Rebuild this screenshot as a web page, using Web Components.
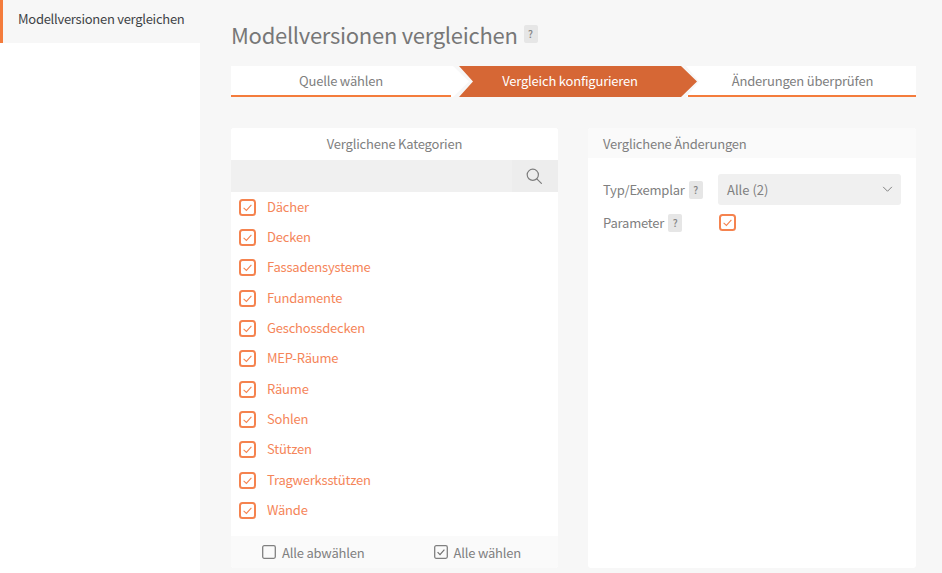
<!DOCTYPE html>
<html lang="de">
<head>
<meta charset="utf-8">
<title>Modellversionen vergleichen</title>
<style>
  html, body { margin: 0; height: 100%; overflow: hidden; }
  body {
    font-family: "Noto Sans CJK SC", "Noto Sans", sans-serif;
    font-size: 13px;
    letter-spacing: -.2px;
    color: #808080;
    background: #f7f7f7;
  }
</style>
</head>
<body>

<compare-app>
  <side-nav slot="nav">Modellversionen vergleichen</side-nav>
  <page-title slot="title">Modellversionen vergleichen</page-title>
  <step-bar slot="steps"></step-bar>

  <compare-panel slot="left" heading="Verglichene Kategorien" centered>
    <search-box></search-box>
    <div style="display:flex;flex-direction:column;flex:1">
      <category-item>Dächer</category-item>
      <category-item>Decken</category-item>
      <category-item>Fassadensysteme</category-item>
      <category-item>Fundamente</category-item>
      <category-item>Geschossdecken</category-item>
      <category-item>MEP-Räume</category-item>
      <category-item>Räume</category-item>
      <category-item>Sohlen</category-item>
      <category-item>Stützen</category-item>
      <category-item>Tragwerksstützen</category-item>
      <category-item>Wände</category-item>
    </div>
    <select-footer></select-footer>
  </compare-panel>

  <compare-panel slot="right" heading="Verglichene Änderungen">
    <change-form></change-form>
  </compare-panel>
</compare-app>

<script>
const CHECK = `<svg viewBox="0 0 17 17" width="17" height="17" fill="none">
  <rect x="1" y="1" width="15" height="15" rx="2.5" stroke="#f5834f" stroke-width="2"/>
  <path d="M4.6 8.8 L7.4 11.4 L12.4 5.8" stroke="#f5834f" stroke-width="1.1"/>
</svg>`;

class CompareApp extends HTMLElement {
  constructor() {
    super();
    this.attachShadow({ mode: 'open' });
    this.shadowRoot.innerHTML = `
      <style>
        :host { display: grid; grid-template-columns: 200px 1fr; height: 573px; }
        .side { background: #fff; }
        .main { padding: 16px 26px 0 31px; display: flex; flex-direction: column; }
        .panels { display: grid; grid-template-columns: 327px 328px; gap: 30px; margin-top: 31px; height: 440px; }
      </style>
      <div class="side"><slot name="nav"></slot></div>
      <div class="main">
        <slot name="title"></slot>
        <slot name="steps"></slot>
        <div class="panels">
          <slot name="left"></slot>
          <slot name="right"></slot>
        </div>
      </div>`;
  }
}

class SideNav extends HTMLElement {
  constructor() {
    super();
    this.attachShadow({ mode: 'open' });
    this.shadowRoot.innerHTML = `
      <style>
        :host {
          display: block; height: 43px; box-sizing: border-box;
          background: #f7f7f7; border-left: 3px solid #f47c3c; white-space: nowrap;
          padding-left: 15px; letter-spacing: -.27px; line-height: 38px; color: #3f4447;
        }
      </style>
      <slot></slot>`;
  }
}

class HelpMark extends HTMLElement {
  constructor() {
    super();
    this.attachShadow({ mode: 'open' });
    this.shadowRoot.innerHTML = `
      <style>
        :host {
          display: inline-block; width: 14px; height: 18px; background: #e6e6e6; border-radius: 2px;
          font-size: 10px; line-height: 18px; text-align: center; color: #858585; font-weight: 500;
          letter-spacing: 0;
        }
      </style>?`;
  }
}

class PageTitle extends HTMLElement {
  constructor() {
    super();
    this.attachShadow({ mode: 'open' });
    this.shadowRoot.innerHTML = `
      <style>
        :host { display: flex; align-items: center; gap: 6px; height: 35px; margin-bottom: 15px;
          font-size: 22px; color: #777; letter-spacing: -.28px; white-space: nowrap; }
      </style>
      <slot></slot><help-mark></help-mark>`;
  }
}

class StepBar extends HTMLElement {
  constructor() {
    super();
    this.attachShadow({ mode: 'open' });
    this.shadowRoot.innerHTML = `
      <style>
        :host { display: flex; height: 31px; line-height: 30px; text-align: center; }
        div { box-sizing: border-box; }
        .one { width: 238px; margin-right: -10px; padding-right: 18px;
          background: linear-gradient(#f47c3c, #f47c3c) 0 100% / 220px 2px no-repeat, #fff;
          clip-path: polygon(0 0, 222px 0, 100% 50%, 222px 100%, 0 100%); }
        .two { width: 238px; background: #d66735; color: #fff; padding-right: 16px;
          clip-path: polygon(0 0, 222px 0, 100% 50%, 222px 100%, 0 100%, 14px 50%); }
        .three { flex: 1; margin-left: -11px; padding-left: 3px;
          background: linear-gradient(#f47c3c, #f47c3c) 2px 100% / 100% 2px no-repeat, #fff;
          clip-path: polygon(0 0, 100% 0, 100% 100%, 0 100%, 13px 50%); }
      </style>
      <div class="one">Quelle wählen</div>
      <div class="two">Vergleich konfigurieren</div>
      <div class="three">Änderungen überprüfen</div>`;
  }
}

class ComparePanel extends HTMLElement {
  constructor() {
    super();
    this.attachShadow({ mode: 'open' });
    const centered = this.hasAttribute('centered');
    this.shadowRoot.innerHTML = `
      <style>
        :host { display: flex; flex-direction: column; background: #fff; border-radius: 3px; overflow: hidden; height: 440px; }
        h2 { margin: 0; height: ${centered ? 32 : 30}px; flex: none; font-size: 13px; font-weight: 400; line-height: 31px;
          color: #808080; text-align: ${centered ? 'center' : 'left'}; padding-left: ${centered ? 0 : 15}px;
          background: ${centered ? '#fff' : '#fafafa'}; }
        .body { flex: 1; display: flex; flex-direction: column; min-height: 0; }
      </style>
      <h2>${this.getAttribute('heading')}</h2>
      <div class="body"><slot></slot></div>`;
  }
}

class SearchBox extends HTMLElement {
  constructor() {
    super();
    this.attachShadow({ mode: 'open' });
    this.shadowRoot.innerHTML = `
      <style>
        :host { display: flex; justify-content: flex-end; height: 32px; background: #f0f0f0; flex: none; }
        span { width: 46px; box-sizing: border-box; padding-right: 3px; background: #ededed; display: flex; align-items: center; justify-content: center; }
      </style>
      <span>
        <svg viewBox="0 0 16 16" width="16" height="16" fill="none" stroke="#7d7d7d" stroke-width="1.2">
          <circle cx="6.8" cy="6.8" r="5.6"/><path d="M10.8 10.8 L15.4 15.4" stroke-linecap="round"/>
        </svg>
      </span>`;
  }
}

class CategoryItem extends HTMLElement {
  constructor() {
    super();
    this.attachShadow({ mode: 'open' });
    this.shadowRoot.innerHTML = `
      <style>
        :host { display: flex; align-items: center; height: 30.35px; padding-left: 8px; gap: 11px;
          color: #f58559; }
        slot { display: block; padding-bottom: 2px; }
        svg { flex: none; }
      </style>
      ${CHECK}<slot></slot>`;
  }
}

class SelectFooter extends HTMLElement {
  constructor() {
    super();
    this.attachShadow({ mode: 'open' });
    this.shadowRoot.innerHTML = `
      <style>
        :host { display: grid; grid-template-columns: 1fr 1fr; height: 32px; flex: none; background: #fafafa;
          color: #808080; }
        div { display: flex; align-items: center; gap: 6px; }
        .off { padding-left: 31px; }
        .on { padding-left: 39px; }
        svg { flex: none; }
      </style>
      <div class="off">
        <svg viewBox="0 0 14 14" width="14" height="14" fill="none"><rect x=".7" y=".7" width="12.6" height="12.6" rx="1.5" stroke="#808080" stroke-width="1.3"/></svg>
        Alle abwählen
      </div>
      <div class="on">
        <svg viewBox="0 0 14 14" width="14" height="14" fill="none"><rect x=".7" y=".7" width="12.6" height="12.6" rx="1.5" stroke="#808080" stroke-width="1.3"/><path d="M3.6 7.2 L6 9.6 L10.4 4.6" stroke="#707070" stroke-width="1.2"/></svg>
        Alle wählen
      </div>`;
  }
}

class ChangeForm extends HTMLElement {
  constructor() {
    super();
    this.attachShadow({ mode: 'open' });
    this.shadowRoot.innerHTML = `
      <style>
        :host { display: grid; grid-template-columns: 115px 183px; grid-auto-rows: auto; padding: 16px 0 0 15px;
          color: #808080; align-items: center; }
        .label { display: flex; align-items: center; gap: 4px; }
        .select { height: 31px; background: #f0f0f0; border-radius: 3px; display: flex; align-items: center;
          justify-content: space-between; padding: 0 8px 0 9px; letter-spacing: 0; }
        .check { height: 35px; display: flex; align-items: center; padding-left: 1px; }
      </style>
      <div class="label">Typ/Exemplar <help-mark></help-mark></div>
      <div class="select">Alle (2)
        <svg viewBox="0 0 12 8" width="11" height="7" fill="none" stroke="#7d7d7d" stroke-width="1.1"><path d="M1 1 L6 6 L11 1"/></svg>
      </div>
      <div class="label">Parameter <help-mark></help-mark></div>
      <div class="check">${CHECK}</div>`;
  }
}

customElements.define('compare-app', CompareApp);
customElements.define('side-nav', SideNav);
customElements.define('help-mark', HelpMark);
customElements.define('page-title', PageTitle);
customElements.define('step-bar', StepBar);
customElements.define('compare-panel', ComparePanel);
customElements.define('search-box', SearchBox);
customElements.define('category-item', CategoryItem);
customElements.define('select-footer', SelectFooter);
customElements.define('change-form', ChangeForm);
</script>
</body>
</html>
